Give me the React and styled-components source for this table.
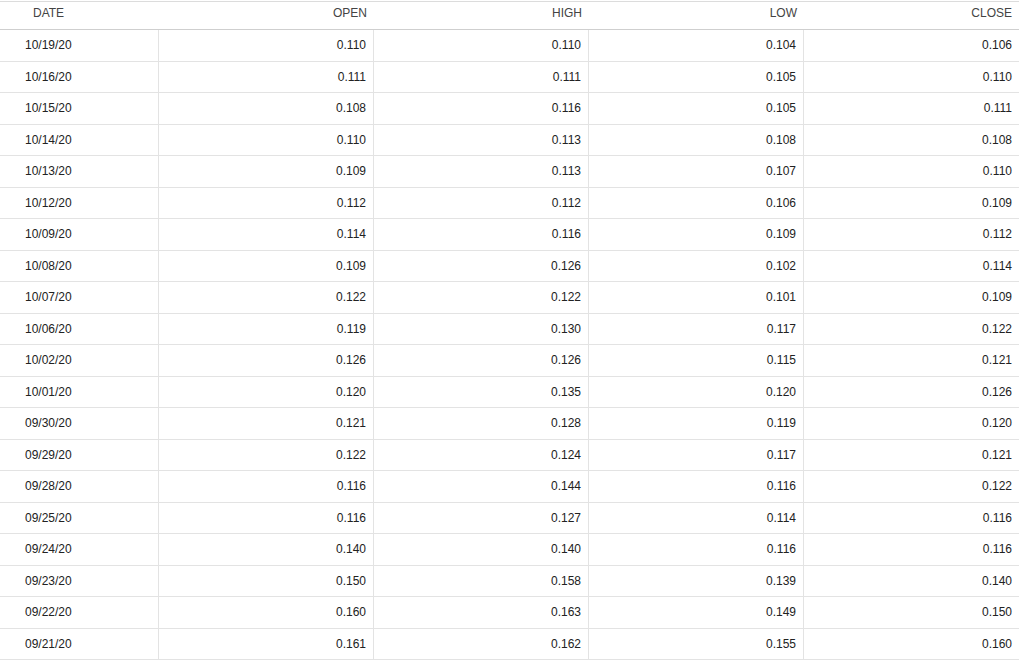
import React from 'react'
import styled, { createGlobalStyle } from 'styled-components'

const GlobalStyle = createGlobalStyle`
body{
margin:0;
background:#fff;
font-family:"Liberation Sans", Arial, sans-serif;
}
`

const Table = styled.div`
width:1019px;
margin-top:1px;
border-top:1px solid #dcdcdc;
`

const Row = styled.div`
display:grid;
grid-template-columns:159px 215px 215px 215px 215px;
box-sizing:border-box;
height:${props => props.head ? '28px' : '31.5px'};
border-bottom:1px solid ${props => props.head ? '#cfcfcf' : '#e3e3e3'};
`

const HeadCell = styled.div`
font-size:12px;
line-height:14px;
color:#444;
padding-top:4px;
text-align:${props => props.left ? 'left' : 'right'};
padding-left:${props => props.left ? '33px' : '0'};
padding-right:${props => props.left ? '0' : '7px'};
`

const Cell = styled.div`
display:flex;
align-items:center;
justify-content:${props => props.left ? 'flex-start' : 'flex-end'};
font-size:12px;
color:#222;
padding-left:${props => props.left ? '25px' : '0'};
padding-right:${props => props.left ? '0' : '7px'};
border-right:${props => props.last ? 'none' : '1px solid #e3e3e3'};
`

const rows = [
    ['10/19/20', '0.110', '0.110', '0.104', '0.106'],
    ['10/16/20', '0.111', '0.111', '0.105', '0.110'],
    ['10/15/20', '0.108', '0.116', '0.105', '0.111'],
    ['10/14/20', '0.110', '0.113', '0.108', '0.108'],
    ['10/13/20', '0.109', '0.113', '0.107', '0.110'],
    ['10/12/20', '0.112', '0.112', '0.106', '0.109'],
    ['10/09/20', '0.114', '0.116', '0.109', '0.112'],
    ['10/08/20', '0.109', '0.126', '0.102', '0.114'],
    ['10/07/20', '0.122', '0.122', '0.101', '0.109'],
    ['10/06/20', '0.119', '0.130', '0.117', '0.122'],
    ['10/02/20', '0.126', '0.126', '0.115', '0.121'],
    ['10/01/20', '0.120', '0.135', '0.120', '0.126'],
    ['09/30/20', '0.121', '0.128', '0.119', '0.120'],
    ['09/29/20', '0.122', '0.124', '0.117', '0.121'],
    ['09/28/20', '0.116', '0.144', '0.116', '0.122'],
    ['09/25/20', '0.116', '0.127', '0.114', '0.116'],
    ['09/24/20', '0.140', '0.140', '0.116', '0.116'],
    ['09/23/20', '0.150', '0.158', '0.139', '0.140'],
    ['09/22/20', '0.160', '0.163', '0.149', '0.150'],
    ['09/21/20', '0.161', '0.162', '0.155', '0.160'],
]

const columns = ['DATE', 'OPEN', 'HIGH', 'LOW', 'CLOSE']

export default function App() {
    return (
        <>
            <GlobalStyle />
            <Table>
                <Row head>
                    {columns.map((c, i) => <HeadCell key={c} left={i === 0}>{c}</HeadCell>)}
                </Row>
                {rows.map((r) => (
                    <Row key={r[0]}>
                        {r.map((v, i) => (
                            <Cell key={i} left={i === 0} last={i === r.length - 1}>{v}</Cell>
                        ))}
                    </Row>
                ))}
            </Table>
        </>
    )
}
